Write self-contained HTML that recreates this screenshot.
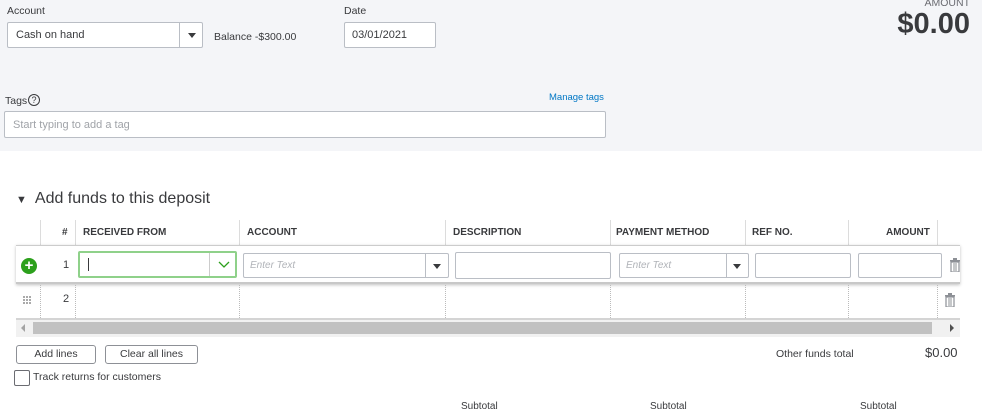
<!DOCTYPE html>
<html><head><style>
*{box-sizing:border-box;margin:0;padding:0}
body{width:982px;height:404px;background:#fff;font-family:"Liberation Sans",Arial,sans-serif;color:#393a3d;position:relative;overflow:hidden;font-size:11px}
.a{position:absolute}
.top{left:0;top:0;width:982px;height:151px;background:#f4f5f8}
.inp{position:absolute;background:#fff;border:1px solid #babec5;border-radius:2px}
.hd{position:absolute;top:220px;height:25px;font-size:10px;font-weight:bold;line-height:25px;color:#393a3d}
.vl{position:absolute;width:0;border-left:1px solid #dcdcdc}
.vd{position:absolute;width:0;border-left:1px dotted #bbb}
.ph{color:#b0b3b8;font-style:italic;font-size:10px}
.btn{position:absolute;border:1px solid #8d9096;border-radius:3px;background:#fff;font-size:10.5px;text-align:center;line-height:17px;color:#393a3d}
.tri{width:0;height:0;border-left:4px solid transparent;border-right:4px solid transparent;border-top:5px solid #393a3d;position:absolute}
</style></head><body>
<div class="a top"></div>
<div class="a" style="left:7px;top:5px;font-size:10.5px">Account</div>
<div class="inp" style="left:7px;top:22px;width:196px;height:26px"><span class="a" style="left:8px;top:6px;font-size:11px">Cash on hand</span><div class="a" style="left:171px;top:0;height:24px;border-left:1px solid #babec5"></div><div class="tri" style="left:180px;top:10px"></div></div>
<div class="a" style="left:214px;top:31px;font-size:10.5px">Balance -$300.00</div>
<div class="a" style="left:344px;top:5px;font-size:10.5px">Date</div>
<div class="inp" style="left:344px;top:22px;width:92px;height:26px"><span class="a" style="left:7px;top:6px;font-size:11px">03/01/2021</span></div>
<div class="a" style="right:12px;top:-3px;font-size:10.5px;color:#6b6c72">AMOUNT</div>
<div class="a" style="right:12px;top:8px;font-size:29px;font-weight:bold;color:#393a3d">$0.00</div>
<div class="a" style="left:5px;top:95px;font-size:10.5px">Tags</div>
<div class="a" style="left:28px;top:94px;width:12px;height:12px;border:1px solid #393a3d;border-radius:50%;font-size:9px;text-align:center;line-height:10px">?</div>
<div class="a" style="left:549px;top:92px;font-size:9.5px;color:#0077c5">Manage tags</div>
<div class="inp" style="left:4px;top:111px;width:602px;height:27px"><span class="a" style="left:8px;top:7px;font-size:11px;color:#a0a3a8">Start typing to add a tag</span></div>

<div class="a" style="left:16px;top:190px;font-size:16px;color:#393a3d"><span style="font-size:11px;margin-right:8px">▼</span>Add funds to this deposit</div>

<div class="vl" style="left:40px;top:220px;height:25px"></div>
<div class="vl" style="left:75px;top:220px;height:25px"></div>
<div class="vl" style="left:239px;top:220px;height:25px"></div>
<div class="vl" style="left:445px;top:220px;height:25px"></div>
<div class="vl" style="left:610px;top:220px;height:25px"></div>
<div class="vl" style="left:745px;top:220px;height:25px"></div>
<div class="vl" style="left:848px;top:220px;height:25px"></div>
<div class="vl" style="left:937px;top:220px;height:25px"></div>
<div class="hd" style="left:62px">#</div>
<div class="hd" style="left:83px">RECEIVED FROM</div>
<div class="hd" style="left:247px">ACCOUNT</div>
<div class="hd" style="left:453px">DESCRIPTION</div>
<div class="hd" style="left:616px">PAYMENT METHOD</div>
<div class="hd" style="left:752px">REF NO.</div>
<div class="hd" style="left:886px">AMOUNT</div>

<div class="a" style="left:16px;top:245px;width:944px;height:39px;background:#fff;border-top:1px solid #ccc;border-bottom:2px solid #c8c8c8;box-shadow:0 1px 3px rgba(0,0,0,.25)"></div>
<div class="a" style="left:21px;top:258px;width:16px;height:16px;border-radius:50%;background:#2ca01c;color:#fff;font-weight:bold;font-size:15px;line-height:15px;text-align:center">+</div>
<div class="a" style="left:63px;top:259px;font-size:11px">1</div>
<div class="inp" style="left:78px;top:251px;width:159px;height:27px;border:2px solid #8fd18a"><div class="a" style="left:8px;top:5px;width:1px;height:13px;background:#393a3d"></div><div class="a" style="left:129px;top:0;height:23px;border-left:1px solid #ccc"></div>
<svg class="a" style="left:138px;top:8px" width="12" height="8"><path d="M1 1 L6 6 L11 1" stroke="#2ca01c" stroke-width="1.3" fill="none"/></svg></div>
<div class="inp" style="left:243px;top:253px;width:206px;height:25px"><span class="a ph" style="left:6px;top:6px">Enter Text</span><div class="a" style="left:181px;top:0;height:23px;border-left:1px solid #babec5"></div><div class="tri" style="left:189px;top:10px"></div></div>
<div class="inp" style="left:455px;top:252px;width:156px;height:27px"></div>
<div class="inp" style="left:619px;top:253px;width:130px;height:25px"><span class="a ph" style="left:6px;top:6px">Enter Text</span><div class="a" style="left:106px;top:0;height:23px;border-left:1px solid #babec5"></div><div class="tri" style="left:113px;top:10px"></div></div>
<div class="inp" style="left:755px;top:253px;width:96px;height:25px"></div>
<div class="inp" style="left:858px;top:253px;width:84px;height:25px"></div>
<svg class="a" style="left:950px;top:258px" width="10" height="14"><rect x="0" y="2" width="10" height="1.5" fill="#8d9096"/><rect x="3" y="0" width="4" height="2" fill="#8d9096"/><rect x="1" y="4" width="8" height="10" fill="none" stroke="#8d9096" stroke-width="1.2"/><path d="M4 5v8M6 5v8" stroke="#8d9096"/></svg>

<div class="vd" style="left:40px;top:285px;height:33px"></div>
<div class="vd" style="left:75px;top:285px;height:33px"></div>
<div class="vd" style="left:239px;top:285px;height:33px"></div>
<div class="vd" style="left:445px;top:285px;height:33px"></div>
<div class="vd" style="left:610px;top:285px;height:33px"></div>
<div class="vd" style="left:745px;top:285px;height:33px"></div>
<div class="vd" style="left:848px;top:285px;height:33px"></div>
<div class="vd" style="left:937px;top:285px;height:33px"></div>
<svg class="a" style="left:23px;top:296px" width="8" height="8" fill="#aaa"><rect x="0" y="0" width="2" height="2"/><rect x="3" y="0" width="2" height="2"/><rect x="6" y="0" width="2" height="2"/><rect x="0" y="3" width="2" height="2"/><rect x="3" y="3" width="2" height="2"/><rect x="6" y="3" width="2" height="2"/><rect x="0" y="6" width="2" height="2"/><rect x="3" y="6" width="2" height="2"/><rect x="6" y="6" width="2" height="2"/></svg>
<div class="a" style="left:63px;top:293px;font-size:11px">2</div>
<svg class="a" style="left:945px;top:293px" width="10" height="14"><rect x="0" y="2" width="10" height="1.5" fill="#8d9096"/><rect x="3" y="0" width="4" height="2" fill="#8d9096"/><rect x="1" y="4" width="8" height="10" fill="none" stroke="#8d9096" stroke-width="1.2"/><path d="M4 5v8M6 5v8" stroke="#8d9096"/></svg>

<div class="a" style="left:16px;top:318px;width:944px;height:2px;background:#d4d4d4"></div>
<div class="a" style="left:16px;top:320px;width:944px;height:17px;background:#f1f1f1"></div>
<div class="a" style="left:33px;top:322px;width:899px;height:12px;background:#c1c1c1"></div>
<div class="a" style="left:21px;top:324px;width:0;height:0;border-top:4px solid transparent;border-bottom:4px solid transparent;border-right:4px solid #a3a3a3"></div>
<div class="a" style="left:950px;top:324px;width:0;height:0;border-top:4px solid transparent;border-bottom:4px solid transparent;border-left:4px solid #505050"></div>

<div class="btn" style="left:16px;top:345px;width:80px;height:19px">Add lines</div>
<div class="btn" style="left:105px;top:345px;width:93px;height:19px">Clear all lines</div>
<div class="a" style="left:14px;top:370px;width:16px;height:16px;border:1px solid #6b6c72;border-radius:2px;background:#fff"></div>
<div class="a" style="left:33px;top:371px;font-size:10.5px">Track returns for customers</div>
<div class="a" style="left:776px;top:348px;font-size:10.5px">Other funds total</div>
<div class="a" style="left:925px;top:345px;font-size:13px">$0.00</div>
<div class="a" style="left:461px;top:401px;font-size:10px">Subtotal</div>
<div class="a" style="left:650px;top:401px;font-size:10px">Subtotal</div>
<div class="a" style="left:860px;top:401px;font-size:10px">Subtotal</div>
</body></html>
